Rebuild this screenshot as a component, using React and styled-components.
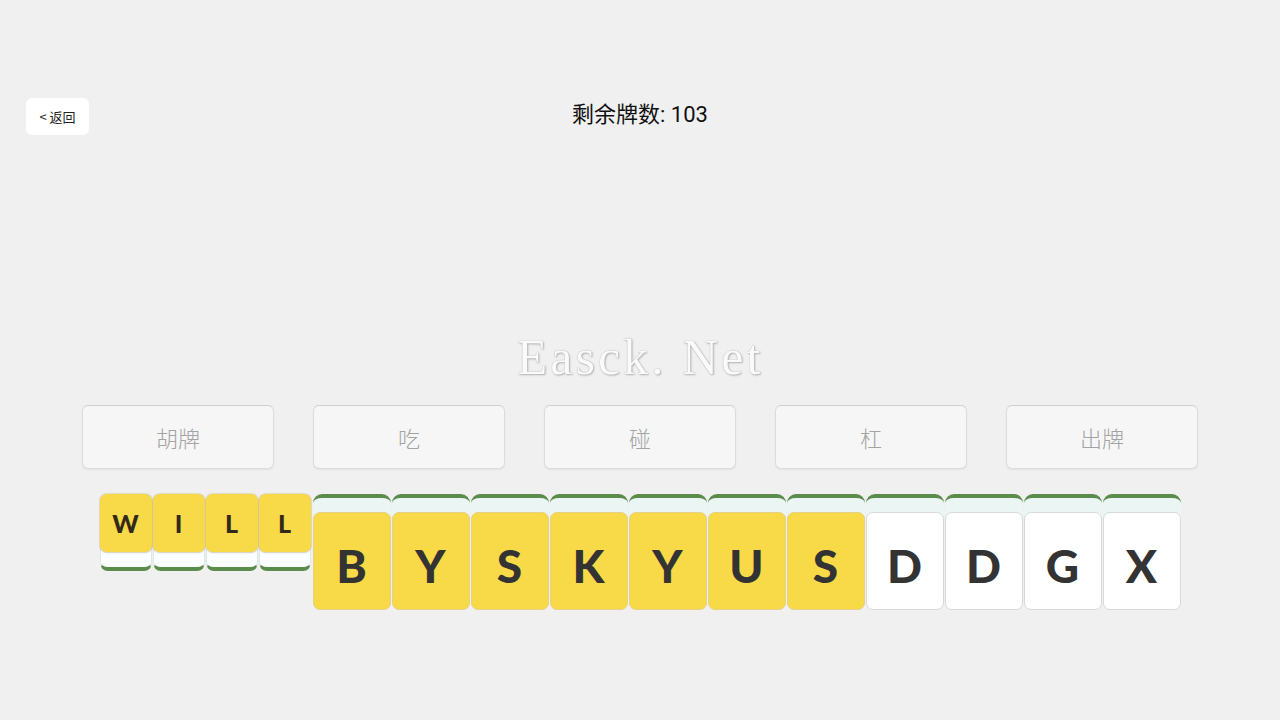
import React from 'react';
import styled, { createGlobalStyle } from 'styled-components';

const GlobalStyle = createGlobalStyle`
  html, body {
    margin: 0;
    padding: 0;
    background: #f0f0f0;
    font-family: "Noto Sans CJK SC", "Noto Sans", sans-serif;
  }
`;

const Page = styled.div`
  position: relative;
  width: 1280px;
  height: 720px;
  padding-top: 98px;
  box-sizing: border-box;
  overflow: hidden;
`;

const Header = styled.div`
  display: grid;
  grid-template-columns: 1fr auto 1fr;
  align-items: center;
  padding: 0 26px;
  height: 37px;
`;

const BackButton = styled.button`
  justify-self: start;
  width: 63px;
  height: 37px;
  padding: 0;
  border: none;
  border-radius: 6px;
  background: #fff;
  color: #222;
  font-family: "Noto Sans CJK SC", sans-serif;
  font-size: 13px;
  cursor: pointer;
`;

const Remaining = styled.div`
  font-family: "Roboto", "Noto Sans CJK SC", sans-serif;
  font-size: 22px;
  color: #111;
  margin-top: -10px;
`;

const Watermark = styled.div`
  position: absolute;
  top: 328px;
  left: 0;
  right: 0;
  text-align: center;
  font-family: "Liberation Serif", "DejaVu Serif", serif;
  font-size: 50px;
  letter-spacing: 3px;
  color: #fafafa;
  text-shadow: 0 0 1px #9a9a9a, 1px 1px 2px rgba(0, 0, 0, 0.25);
  pointer-events: none;
`;

const ActionBar = styled.div`
  display: flex;
  justify-content: center;
  gap: 39px;
  margin-top: 270px;
`;

const ActionButton = styled.button`
  width: 192px;
  height: 64px;
  background: #f6f6f6;
  border: 1px solid #dcdcdc;
  border-top-color: #cfcfcf;
  border-radius: 6px;
  color: #a3a3a3;
  font-family: "Noto Sans CJK SC", sans-serif;
  font-size: 22px;
  font-weight: 300;
  box-shadow: 0 1px 2px rgba(0, 0, 0, 0.06);
`;

const Hand = styled.div`
  display: flex;
  justify-content: center;
  align-items: flex-start;
  gap: 1px;
  margin-top: 25px;
`;

const SmallTile = styled.div`
  width: 52px;
  height: 77px;
  box-sizing: border-box;
  background: #fbfefe;
  border: 1px solid #dfe6e4;
  border-bottom: 4px solid #5b8c4c;
  border-radius: 8px;
`;

const SmallFace = styled.div`
  height: 58px;
  margin: -1px -1px 0;
  background: #f8d947;
  border-radius: 7px;
  display: flex;
  align-items: center;
  justify-content: center;
  font-family: "Lato", "Open Sans", sans-serif;
  font-weight: 900;
  font-size: 25px;
  color: #33291a;
  box-shadow: 0 0 0 1px rgba(200, 180, 120, 0.35), 0 1px 2px rgba(0, 0, 0, 0.12);
`;

const BigTile = styled.div`
  width: 78px;
  height: 116px;
  box-sizing: border-box;
  padding-top: 14px;
  background: #eaf5f4;
  border-top: 4px solid #5b8c4c;
  border-radius: 9px;
  margin-left: ${(p) => (p.$first ? '1px' : '0')};
`;

const BigFace = styled.div`
  height: 98px;
  box-sizing: border-box;
  background: ${(p) => (p.$gold ? '#f8d947' : '#ffffff')};
  border: 1px solid ${(p) => (p.$gold ? '#e6d08a' : '#d9d9d9')};
  border-radius: 7px;
  display: flex;
  align-items: center;
  justify-content: center;
  padding-top: 8px;
  font-family: "Lato", "Open Sans", sans-serif;
  font-weight: 900;
  font-size: 46px;
  color: #333;
`;

const actions = ['胡牌', '吃', '碰', '杠', '出牌'];
const revealed = ['W', 'I', 'L', 'L'];
const hand = [
  { c: 'B', gold: true },
  { c: 'Y', gold: true },
  { c: 'S', gold: true },
  { c: 'K', gold: true },
  { c: 'Y', gold: true },
  { c: 'U', gold: true },
  { c: 'S', gold: true },
  { c: 'D', gold: false },
  { c: 'D', gold: false },
  { c: 'G', gold: false },
  { c: 'X', gold: false },
];

export default function App() {
  return (
    <Page>
      <GlobalStyle />
      <Header>
        <BackButton>&lt; 返回</BackButton>
        <Remaining>剩余牌数: 103</Remaining>
        <div />
      </Header>
      <Watermark>Easck. Net</Watermark>
      <ActionBar>
        {actions.map((a) => (
          <ActionButton key={a}>{a}</ActionButton>
        ))}
      </ActionBar>
      <Hand>
        {revealed.map((c, i) => (
          <SmallTile key={'r' + i}>
            <SmallFace>{c}</SmallFace>
          </SmallTile>
        ))}
        {hand.map((t, i) => (
          <BigTile key={'h' + i} $first={i === 0}>
            <BigFace $gold={t.gold}>{t.c}</BigFace>
          </BigTile>
        ))}
      </Hand>
    </Page>
  );
}
